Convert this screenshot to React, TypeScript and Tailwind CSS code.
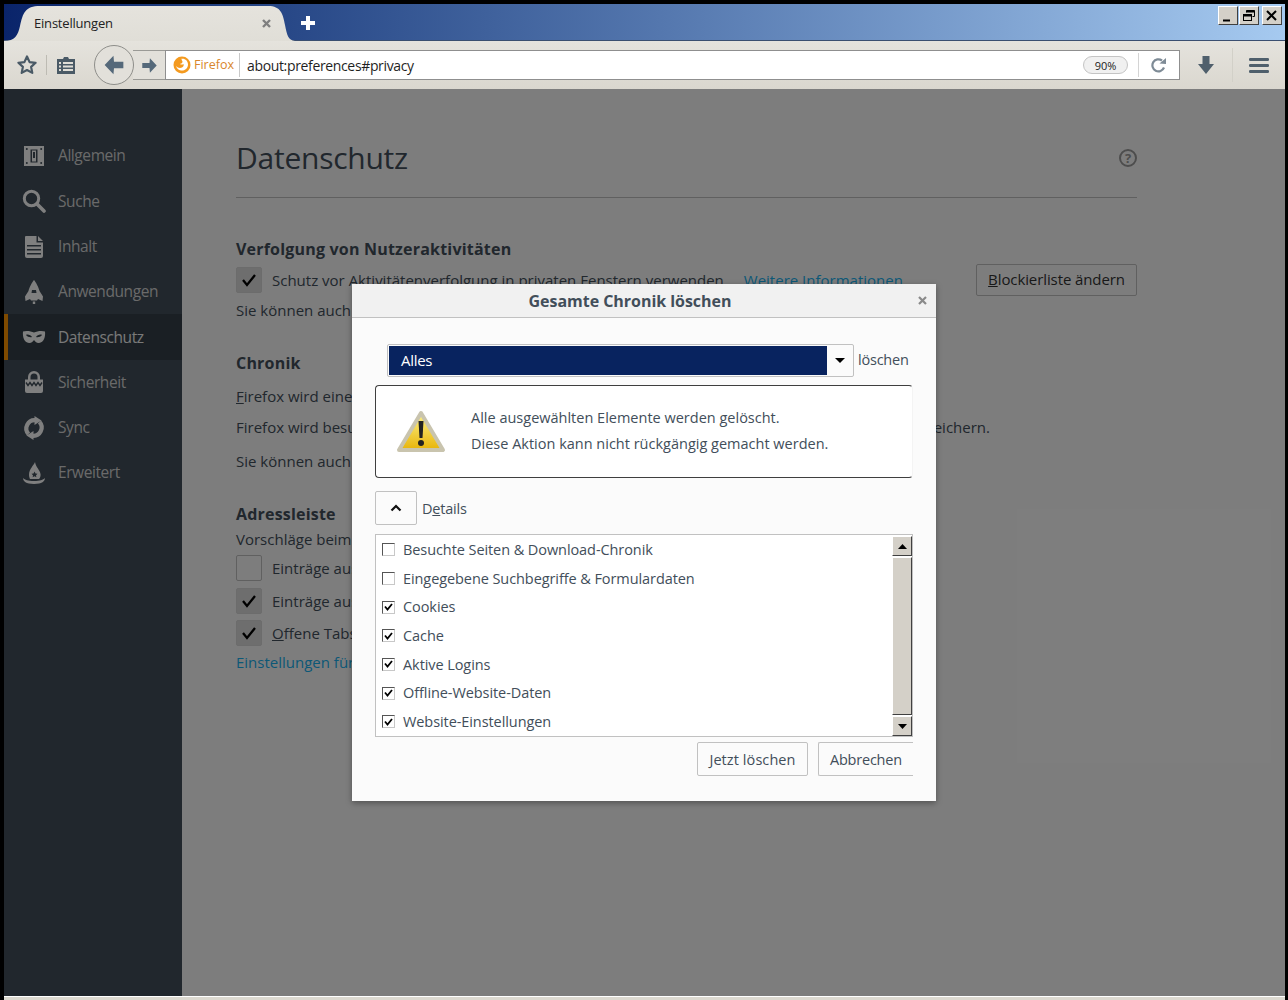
import React from "react";

const FONT = "font-['Open_Sans','Noto_Sans',sans-serif]";

function WinBtn({ kind, className }: { kind: "min" | "max" | "close"; className?: string }) {
  return (
    <div className={`w-5 h-[19px] bg-[#d4d0c8] border border-t-white border-l-white border-r-[#404040] border-b-[#404040] flex items-center justify-center ${className ?? ""}`}>
      <svg width="16" height="14" viewBox="0 0 16 14" fill="none" stroke="#000">
        {kind === "min" && <path d="M3 11.500h7" strokeWidth="2" />}
        {kind === "max" && (
          <g strokeWidth="1">
            <path d="M5.500 3.500v-2h8v6h-2" />
            <path d="M5.500 2.500h8" strokeWidth="2" />
            <rect x="2.500" y="5.500" width="8" height="6" fill="#d4d0c8" />
            <path d="M2.500 6.500h8" strokeWidth="2" />
          </g>
        )}
        {kind === "close" && <path d="M3 2l9 9M12 2l-9 9" strokeWidth="2" />}
      </svg>
    </div>
  );
}

function Tab() {
  return (
    <div className="relative w-[291px] h-[37px] shrink-0 flex items-center">
      <svg className="absolute inset-0" width="291" height="37" viewBox="0 0 291 37">
        <defs>
          <linearGradient id="tabg" x1="0" y1="0" x2="0" y2="1">
            <stop offset="0" stopColor="#e5e3dd" />
            <stop offset="1" stopColor="#e0ded7" />
          </linearGradient>
        </defs>
        <path d="M0 37c11 0 14-6 16-15C19 9 21 2 36 2h228c13 0 15 8 17 19 2 10 3 15 10 16z" fill="url(#tabg)" />
      </svg>
      <span className="relative ml-[30px] mt-[2px] text-[13px] text-[#222] tracking-[-0.2px] leading-none">Einstellungen</span>
      <svg className="absolute left-[258px] top-[15px]" width="9" height="9" viewBox="0 0 9 9" stroke="#7f7f7f" strokeWidth="2.400">
        <path d="M1 1l7 7M8 1l-7 7" />
      </svg>
    </div>
  );
}

function Star() {
  return (
    <svg width="22" height="22" viewBox="0 0 22 22" fill="none" stroke="#4a5a66" strokeWidth="2.200" strokeLinejoin="round">
      <path d="M11 2.500l2.600 5.600 6 .7-4.500 4.100 1.200 6L11 16l-5.300 2.900 1.200-6-4.500-4.100 6-.7z" />
    </svg>
  );
}

function ClipList() {
  return (
    <svg width="20" height="20" viewBox="0 0 20 20">
      <path d="M1 4h6l1-2h4l1 2h6v15H1z" fill="#4a5a66" />
      <path d="M3 7h2v2H3zM7 7h10v2H7zM3 10.500h2v2H3zM7 10.500h10v2H7zM3 14h2v2H3zM7 14h10v2H7z" fill="#e0ded7" />
    </svg>
  );
}

function Arrow({ size, dir = 1 }: { size: number; dir?: number }) {
  return (
    <svg width={size} height={size} viewBox="0 0 20 20" style={{ transform: dir < 0 ? "scaleX(-1)" : undefined }}>
      <path d="M10.500 1.500l8 8.500-8 8.500-.5-5.500H1.500V7H10z" fill="#55697a" />
    </svg>
  );
}

function Toolbar() {
  return (
    <div className="h-[48px] flex items-center bg-gradient-to-b from-[#e5e3dd] to-[#dad7cf] shrink-0 relative">
      <div className="w-[42px] flex justify-center pl-[4px]"><Star /></div>
      <div className="w-px h-[20px] bg-[#bdbbb3]" />
      <div className="w-[38px] flex justify-center"><ClipList /></div>
      <div className="flex items-center ml-[9px]">
        <div className="w-[40px] h-[40px] rounded-full border border-[#8e8e8a] bg-[#e2e0da] flex items-center justify-center z-10">
          <Arrow size={22} dir={-1} />
        </div>
        <div className="h-[30px] w-[32px] -ml-[1px] border-y border-[#9a9a96] bg-[#e2e0da] flex items-center justify-end pr-[7px]">
          <Arrow size={17} />
        </div>
      </div>
      <div className="w-[1015px] h-[30px] bg-white border border-[#8f8f8f] flex items-center">
        <div className="flex items-center w-[74px] h-[24px] border-r border-[#c9c9c9] pl-[7px] gap-[3px]">
          <svg width="18" height="18" viewBox="0 0 18 18" className="shrink-0">
            <circle cx="9" cy="9" r="8.500" fill="#f49a1f" />
            <path d="M8 3c3.500-1 7 1.500 7 5.500 0 4-3.500 6.500-7 6-2.500-.4-4.500-2.200-5-4.500 1.500 1.800 4 2.500 6 1.500 1.500-.8 2-2.300 1.500-3.500-1 .8-2.500.8-3.500 0 1.500-.5 2.500-1 2.500-2.500-.5-1-1-1.800-1-2.500z" fill="#fff" />
          </svg>
          <span className="text-[12.500px] text-[#d9862b] leading-none mt-px">Firefox</span>
        </div>
        <span className="ml-[7px] mt-px text-[14px] text-[#1f1f1f] leading-none tracking-[-0.35px]">about:preferences#privacy</span>
        <div className="ml-auto w-[45px] h-[18px] rounded-full border border-[#c4c4c4] bg-[#f0f0f0] flex items-center justify-center text-[11px] text-[#222] leading-none">90%</div>
        <div className="w-px h-[24px] bg-[#d4d4d4] ml-[10px]" />
        <div className="w-[40px] flex justify-center">
          <svg width="16" height="16" viewBox="0 0 16 16" fill="none">
            <path d="M13 10.500A6 6 0 1 1 11 3.500" stroke="#7e8b96" strokeWidth="2.200" />
            <path d="M8.500 6.500L15 7V1z" fill="#7e8b96" />
          </svg>
        </div>
      </div>
      <div className="w-[52px] flex justify-center">
        <svg width="18" height="20" viewBox="0 0 18 20"><path d="M5.500 1h7v8H17l-8 10-8-10h4.500z" fill="#4f5f6c" /></svg>
      </div>
      <div className="w-px h-[34px] bg-[#d2d0c8]" />
      <div className="flex-1 flex justify-center">
        <svg width="20" height="15" viewBox="0 0 20 15" fill="#4f5f6c">
          <rect y="0" width="20" height="3" rx="1.200" />
          <rect y="6" width="20" height="3" rx="1.200" />
          <rect y="12" width="20" height="3" rx="1.200" />
        </svg>
      </div>
    </div>
  );
}

const I = "#ffffff";
const icons: Record<string, React.ReactNode> = {
  Allgemein: (
    <svg width="22" height="22" viewBox="0 0 22 22">
      <path fillRule="evenodd" d="M1 1h20v20H1zM7.500 4.500v13h7v-13z" fill={I} />
      <path fillRule="evenodd" d="M9 5.500h4v11H9zM10 7v6h2V7z" fill={I} />
      <g fill="#424f5a"><circle cx="3.800" cy="4" r="1" /><circle cx="18.200" cy="4" r="1" /><circle cx="3.800" cy="18" r="1" /><circle cx="18.200" cy="18" r="1" /></g>
    </svg>
  ),
  Suche: (
    <svg width="24" height="24" viewBox="0 0 24 24" fill="none" stroke={I}>
      <circle cx="9.500" cy="9.500" r="7.200" strokeWidth="3" />
      <path d="M15 15l7 7" strokeWidth="3.600" strokeLinecap="round" />
    </svg>
  ),
  Inhalt: (
    <svg width="20" height="24" viewBox="0 0 20 24">
      <path d="M2 1h10.500v6.500H19V21a2 2 0 0 1-2 2H3a2 2 0 0 1-2-2V2a1 1 0 0 1 1-1zM14 1l5 5h-5z" fill={I} />
      <path d="M3 10h14v1.500H3zM3 14h14v1.500H3zM3 18h14v1.500H3z" fill="#424f5a" />
    </svg>
  ),
  Anwendungen: (
    <svg width="20" height="26" viewBox="0 0 20 26">
      <path d="M10 1c1.500 1.500 5 8 5.500 11L19 17.500 18.500 22l-4.500-2-1 1.500H7L6 20l-4.500 2L1 17.500 4.500 12C5 9 8.500 2.500 10 1z" fill={I} />
      <path d="M8 11h4l.5 3h-5z" fill="#424f5a" />
      <path d="M8.800 22.500h2.400v2.500H8.800z" fill={I} />
    </svg>
  ),
  Datenschutz: (
    <svg width="24" height="14" viewBox="0 0 24 14">
      <path fillRule="evenodd" d="M1 1.500C4 .5 9 1 12 2.500 15 1 20 .5 23 1.500c.6 5-1 11-6 11.500-2.500.2-4-1.500-5-3-1 1.500-2.500 3.200-5 3C2 12.500.4 6.500 1 1.500zM4 5c1.500 2 4 2.500 6 2-1-2-4.500-3-6-2zM20 5c-1.500 2-4 2.500-6 2 1-2 4.500-3 6-2z" fill={I} />
    </svg>
  ),
  Sicherheit: (
    <svg width="20" height="24" viewBox="0 0 20 24">
      <path d="M4 10V7a6 6 0 0 1 12 0v3h-2.500V7a3.500 3.500 0 0 0-7 0v3z" fill={I} />
      <path d="M1 9.500h18V21a2 2 0 0 1-2 2H3a2 2 0 0 1-2-2z" fill={I} />
      <path d="M2 12.500l2 3 2-3 2 3 2-3 2 3 2-3 2 3 2-3" stroke="#424f5a" strokeWidth="1.400" fill="none" />
    </svg>
  ),
  Sync: (
    <svg width="24" height="24" viewBox="0 0 24 24">
      <path d="M13.500 4.200A8.300 8.300 0 0 0 6.500 18" fill="none" stroke={I} strokeWidth="4.200" />
      <path d="M10.500 19.800A8.300 8.300 0 0 0 17.500 6" fill="none" stroke={I} strokeWidth="4.200" />
      <path d="M12.500 0l7 4.500-7 4.500zM11.500 24l-7-4.500 7-4.500z" fill={I} />
    </svg>
  ),
  Erweitert: (
    <svg width="24" height="24" viewBox="0 0 24 24" fill={I}>
      <path d="M13 1c-1 3-6 7-6 13 0 2 1 4 1 4h9s2-2 1.500-5C18 9 14 6.500 13 1z" />
      <path d="M1 17c2 2 5 3 11 3s9-1 11-3c0 3-3 6-11 6S1 20 1 17z" />
      <path d="M12.500 10.500l1 2 2 .3-1.500 1.400.4 2.100-1.900-1-1.900 1 .4-2.100-1.500-1.400 2-.3z" fill="#424f5a" />
    </svg>
  ),
};

const nav = ["Allgemein", "Suche", "Inhalt", "Anwendungen", "Datenschutz", "Sicherheit", "Sync", "Erweitert"];

function Sidebar() {
  return (
    <div className="w-[178px] bg-[#424f5a] pt-[44.300px] shrink-0">
      {nav.map((n) => {
        const active = n === "Datenschutz";
        return (
          <div key={n} className={`h-[45.300px] flex items-center border-l-[4px] ${active ? "border-[#ff9500] bg-[#343f48]" : "border-transparent"}`}>
            <div className="w-[50px] flex justify-center pl-[1px]">{icons[n]}</div>
            <span className={`text-[15.500px] tracking-[-0.42px] ${active ? "text-[#f2f2f2]" : "text-[#d4d4d4]"}`}>{n}</span>
          </div>
        );
      })}
    </div>
  );
}

function Cb({ on }: { on?: boolean }) {
  return (
    <div className={`w-[26px] h-[26px] rounded-[2px] shrink-0 border flex items-center justify-center ${on ? "bg-[#dcdcdc] border-[#d8d8d8]" : "bg-[#fbfbfb] border-[#c1c1c1]"}`}>
      {on && (
        <svg width="16" height="14" viewBox="0 0 16 14" fill="none" stroke="#000" strokeWidth="2.300"><path d="M2 7l4 5 8-10" /></svg>
      )}
    </div>
  );
}

function H({ children, className }: { children: React.ReactNode; className?: string }) {
  return <div className={`h-[24px] leading-[24px] text-[16px] font-bold text-[#424e5a] tracking-[0.2px] ${className ?? ""}`}>{children}</div>;
}
function L({ children, className, link }: { children: React.ReactNode; className?: string; link?: boolean }) {
  return <div className={`h-[24px] leading-[22px] text-[15px] whitespace-nowrap ${link ? "text-[#18b0ee]" : "text-[#424e5a]"} ${className ?? ""}`}>{children}</div>;
}

function Main() {
  return (
    <div className="flex-1 bg-[#fbfbfb] pt-[49px] pl-[54px] pr-[148px]">
      <div className="h-[60px] border-b border-[#c1c1c1] flex justify-between">
        <div className="text-[30px] leading-[40px] text-[#424e5a] tracking-[-0.25px]">Datenschutz</div>
        <div className="w-[18px] h-[18px] mt-[11px] rounded-full border-2 border-[#9a9a9a] text-[#9a9a9a] text-[13px] font-bold leading-none flex items-center justify-center">?</div>
      </div>
      <H className="mt-[39px]">Verfolgung von Nutzeraktivitäten</H>
      <div className="h-[32px] mt-[3px] flex items-center">
        <Cb on />
        <L className="ml-[10px] pt-px">Schutz vor Aktivitätenverfolgung in privaten Fenstern verwenden</L>
        <L link className="ml-[20px] pt-px">Weitere Informationen</L>
        <div className="ml-auto h-[32px] w-[161px] border border-[#c1c1c1] rounded-[2px] bg-[#fbfbfb] flex items-center justify-center text-[15px] text-[#333] tracking-[-0.1px] pb-[2px]"><span><u>B</u>lockierliste ändern</span></div>
      </div>
      <L className="mt-[3px]">Sie können auch</L>
      <H className="mt-[28px]">Chronik</H>
      <L className="mt-[10px]"><u>F</u>irefox wird eine</L>
      <div className="w-[754px] mt-[7px] flex justify-between">
        <L>Firefox wird besuchte</L>
        <L>speichern.</L>
      </div>
      <L className="mt-[10px]">Sie können auch</L>
      <H className="mt-[28px]">Adressleiste</H>
      <L className="mt-[2px]">Vorschläge beim</L>
      {[false, true, true].map((on, i) => (
        <div key={i} className="h-[32.500px] flex items-center">
          <Cb on={on} />
          <L className="ml-[10px] pt-px">{i === 2 ? <><u>O</u>ffene Tabs</> : "Einträge aus"}</L>
        </div>
      ))}
      <L link className="mt-[1px]">Einstellungen für</L>
    </div>
  );
}

function Warn() {
  return (
    <svg width="52" height="46" viewBox="0 0 52 46">
      <defs>
        <linearGradient id="wg" x1="0" y1="0" x2="0" y2="1">
          <stop offset="0" stopColor="#fdf28a" />
          <stop offset="1" stopColor="#e8b408" />
        </linearGradient>
      </defs>
      <path d="M26 4L48 41H4z" fill="url(#wg)" stroke="#c9c4ae" strokeWidth="4" strokeLinejoin="round" />
      <path d="M23.500 12h5l-1 17h-3z" fill="#222" />
      <circle cx="26" cy="34" r="3" fill="#222" />
    </svg>
  );
}

function ScrollBtn({ up }: { up?: boolean }) {
  return (
    <div className="h-[20px] bg-[#d4d0c8] border border-t-white border-l-white border-r-[#404040] border-b-[#404040] flex items-center justify-center shrink-0">
      <svg width="9" height="5" viewBox="0 0 9 5"><path d={up ? "M4.500 0L9 5H0z" : "M0 0h9L4.500 5z"} fill="#000" /></svg>
    </div>
  );
}

const rows: [string, boolean][] = [
  ["Besuchte Seiten & Download-Chronik", false],
  ["Eingegebene Suchbegriffe & Formulardaten", false],
  ["Cookies", true],
  ["Cache", true],
  ["Aktive Logins", true],
  ["Offline-Website-Daten", true],
  ["Website-Einstellungen", true],
];

function Dialog() {
  const base = "text-[14.500px] text-[#424e5a]";
  return (
    <div className="absolute left-[348px] top-[195px] w-[584px] h-[517px] bg-[#fbfbfb] shadow-[0_2px_6px_rgba(0,0,0,0.35)]">
      <div className="h-[34px] bg-[#f1f1f1] border-b border-[#c1c1c1] relative flex items-center justify-center pr-[28px]">
        <span className="text-[16px] font-bold text-[#424e5a] tracking-[-0.04px]">Gesamte Chronik löschen</span>
        <svg className="absolute right-[9px] top-[12px]" width="9" height="9" viewBox="0 0 9 9" stroke="#8a8a8a" strokeWidth="2.200"><path d="M1 1l7 7M8 1l-7 7" /></svg>
      </div>
      <div className="pl-[23px] w-[561px]">
        <div className="flex items-center h-[33px] mt-[26px] ml-[12px]">
          <div className="w-[467px] h-[33px] border border-[#c1c1c1] rounded-[2px] bg-[#fbfbfb] flex p-px shrink-0">
            <div className="w-[438px] bg-[#08235f] text-white text-[15px] tracking-[-0.3px] leading-[28px] pl-[12px]">Alles</div>
            <div className="flex-1 flex items-center justify-center">
              <svg width="10" height="5" viewBox="0 0 10 5"><path d="M0 0h10L5 5z" fill="#000" /></svg>
            </div>
          </div>
          <span className={`ml-[4px] pb-[2px] ${base} tracking-[-0.22px]`}>löschen</span>
        </div>
        <div className="h-[93px] mt-[8px] rounded-[4px] border border-[#3f3f3f] border-r-[#f4f4f4] bg-white flex items-center">
          <div className="w-[95px] flex justify-center pr-[6px]"><Warn /></div>
          <div className={`${base} leading-[26px] mt-[-2px]`}>
            <div>Alle ausgewählten Elemente werden gelöscht.</div>
            <div>Diese Aktion kann nicht rückgängig gemacht werden.</div>
          </div>
        </div>
        <div className="flex items-center mt-[13px] h-[34px]">
          <div className="w-[42px] h-[34px] border border-[#c1c1c1] rounded-[2px] flex items-center justify-center">
            <svg width="12" height="8" viewBox="0 0 12 8" fill="none" stroke="#111" strokeWidth="2.200"><path d="M1.500 6.500L6 2l4.500 4.500" /></svg>
          </div>
          <span className={`ml-[5px] pt-px ${base} tracking-[-0.22px]`}>D<u>e</u>tails</span>
        </div>
        <div className="h-[203px] mt-[9px] border border-[#c1c1c1] bg-white flex">
          <div className="flex-1 pl-[6px] pt-[0.400px]">
            {rows.map(([t, on]) => (
              <div key={t} className="h-[28.700px] flex items-center">
                <div className="w-[13px] h-[13px] border border-t-[#555] border-l-[#555] border-r-[#c8c8c8] border-b-[#c8c8c8] bg-white flex items-center justify-center">
                  {on && <svg width="9" height="8" viewBox="0 0 9 8" fill="none" stroke="#000" strokeWidth="1.800"><path d="M1 3.500l2.500 3L8 1" /></svg>}
                </div>
                <span className={`ml-[8px] ${base} tracking-[-0.08px]`}>{t}</span>
              </div>
            ))}
          </div>
          <div className="w-[20px] flex flex-col pt-px">
            <ScrollBtn up />
            <div className="flex-1 my-px bg-[#d4d0c8] border border-l-white border-r-[#404040] border-t-white border-b-[#404040]" />
            <ScrollBtn />
          </div>
        </div>
        <div className="flex justify-end mt-[5px] gap-[10px]">
          <div className={`w-[111px] h-[34px] border border-[#c1c1c1] rounded-[2px] flex items-center justify-center pt-px ${base} tracking-[0.08px]`}>Jetzt löschen</div>
          <div className={`w-[95px] h-[34px] border border-[#c1c1c1] border-r-0 rounded-l-[2px] flex items-center pl-[11px] pt-px ${base} tracking-[-0.22px]`}>Abbrechen</div>
        </div>
      </div>
    </div>
  );
}

export default function App() {
  return (
    <div className={`w-[1288px] h-[1000px] bg-black pl-[4px] pr-[3px] pt-[4px] flex flex-col overflow-hidden ${FONT}`}>
      <div className="h-[37px] shrink-0 flex bg-gradient-to-r from-[#0a246a] to-[#a6caf0] border-b border-[#3b4f70]">
        <Tab />
        <div className="ml-[6px] h-[38px] flex items-center">
          <svg width="14" height="14" viewBox="0 0 14 14" fill="#fff"><path d="M5 0h4v5h5v4H9v5H5V9H0V5h5z" /></svg>
        </div>
        <div className="ml-auto flex items-start pt-[2px] pr-[3px]">
          <WinBtn kind="min" />
          <WinBtn kind="max" className="ml-px" />
          <WinBtn kind="close" className="ml-[3px]" />
        </div>
      </div>
      <Toolbar />
      <div className="relative flex h-[907px] shrink-0">
        <Sidebar />
        <Main />
        <div className="absolute inset-0 bg-black/50" />
        <Dialog />
      </div>
      <div className="flex-1 border-t border-white bg-[#dcd9d0]" />
    </div>
  );
}
